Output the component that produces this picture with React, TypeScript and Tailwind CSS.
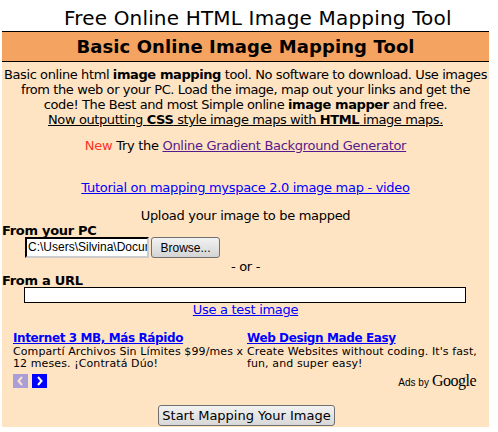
export default function App() {
  return (
    <div className="min-h-[432px] bg-white font-['DejaVu_Sans',Verdana,sans-serif] text-black">
      <div className="pt-[5px] pl-[64px] text-[20px] leading-[26px] tracking-[0.17px] whitespace-nowrap">
        Free Online HTML Image Mapping Tool
      </div>

      <div className="ml-[2px] w-[487px] bg-[#ffe4c4] pb-[1px]">
        {/* Header */}
        <div className="border-y border-black bg-[#f4a460] h-[31px] flex items-center justify-center">
          <h1 className="text-[18px] font-bold leading-none tracking-[0.1px]">Basic Online Image Mapping Tool</h1>
        </div>

        <div className="text-[13px] leading-[15px] tracking-[-0.3px]">
          {/* Intro */}
          <p className="pt-[5px] text-center whitespace-nowrap tracking-[-0.4px]">
            Basic online html <b>image mapping</b> tool. No software to download. Use images
            <br />
            from the web or your PC. Load the image, map out your links and get the
            <br />
            code! The Best and most Simple online <b>image mapper</b> and free.
            <br />
            <span className="underline">
              Now outputting <b>CSS</b> style image maps with <b>HTML</b> image maps.
            </span>
          </p>

          <p className="mt-[11px] text-center">
            <span className="text-[#ff3322]">New</span> Try the{" "}
            <a className="text-[#551a8b] underline">Online Gradient Background Generator</a>
          </p>

          <p className="mt-[27px] text-center">
            <a className="text-[#0000ff] underline">Tutorial on mapping myspace 2.0 image map - video</a>
          </p>

          <p className="mt-[13px] text-center">Upload your image to be mapped</p>

          {/* From PC */}
          <div className="font-bold">From your PC</div>
          <div className="mt-[-1px] pl-[23px] flex items-center gap-[2px] h-[21px] tracking-normal">
            <div className="w-[124px] h-[21px] bg-white border-2 border-black border-r-[#ccc] border-b-[#ccc] overflow-hidden font-['Liberation_Sans',Arial,sans-serif] text-[12px] leading-[17px] pl-[1px] whitespace-nowrap">
              C:\Users\Silvina\Documents\mapa.jpg
            </div>
            <button className="w-[69px] h-[21px] rounded-[3px] border border-[#707070] bg-gradient-to-b from-[#f2f2f2] to-[#d4d4d4] font-['Liberation_Sans',Arial,sans-serif] text-[12px] leading-none">
              Browse...
            </button>
          </div>

          <p className="mt-[2px] text-center leading-[14px]">- or -</p>

          {/* From URL */}
          <div className="font-bold leading-[14px]">From a URL</div>
          <div className="mt-[-1px] pl-[22px]">
            <div className="w-[442px] h-[16px] bg-white border border-black" />
          </div>

          <p className="text-center leading-[14px]">
            <a className="text-[#0000ff] underline">Use a test image</a>
          </p>
        </div>

        {/* Ads */}
        <div className="mt-[14px] px-[11px]">
          <div className="grid grid-cols-[234px_1fr] text-[11px] leading-[12px] tracking-[0.1px]">
            <div>
              <a className="block text-[12px] leading-[14px] font-bold text-[#0000ff] underline tracking-[-0.4px] whitespace-nowrap">
                Internet 3 MB, Más Rápido
              </a>
              <div className="mt-[1px] whitespace-nowrap">
                Compartí Archivos Sin Límites $99/mes x
                <br />
                12 meses. ¡Contratá Dúo!
              </div>
            </div>
            <div>
              <a className="block text-[12px] leading-[14px] font-bold text-[#0000ff] underline tracking-[-0.4px] whitespace-nowrap">
                Web Design Made Easy
              </a>
              <div className="mt-[1px] whitespace-nowrap">
                Create Websites without coding. It's fast,
                <br />
                fun, and super easy!
              </div>
            </div>
          </div>
          <div className="mt-[4px] h-[14px] flex items-center justify-between">
            <div className="flex gap-[4px]">
              <span className="w-[15px] h-[14px] bg-[#a99ed8] flex items-center justify-center">
                <svg width="7" height="10" viewBox="0 0 7 10">
                  <path d="M5 1 L1.5 5 L5 9" stroke="#ffe4c4" strokeWidth="2" fill="none" />
                </svg>
              </span>
              <span className="w-[15px] h-[14px] bg-[#0000ff] flex items-center justify-center">
                <svg width="7" height="10" viewBox="0 0 7 10">
                  <path d="M2 1 L5.5 5 L2 9" stroke="#ffffff" strokeWidth="2" fill="none" />
                </svg>
              </span>
            </div>
            <div className="flex items-baseline gap-[3px] pr-[2px] leading-none">
              <span className="font-['Liberation_Sans',Arial,sans-serif] text-[10px]">Ads by</span>
              <span className="font-['Liberation_Serif','Times_New_Roman',serif] text-[16px] tracking-[-0.5px]">Google</span>
            </div>
          </div>
        </div>

        {/* Submit */}
        <div className="mt-[17px] flex justify-center">
          <button className="ml-[2px] h-[21px] px-[3px] rounded-[3px] border border-[#707070] bg-gradient-to-b from-[#f2f2f2] to-[#d8d8d8] text-[13px] leading-none">
            Start Mapping Your Image
          </button>
        </div>
      </div>
    </div>
  );
}
